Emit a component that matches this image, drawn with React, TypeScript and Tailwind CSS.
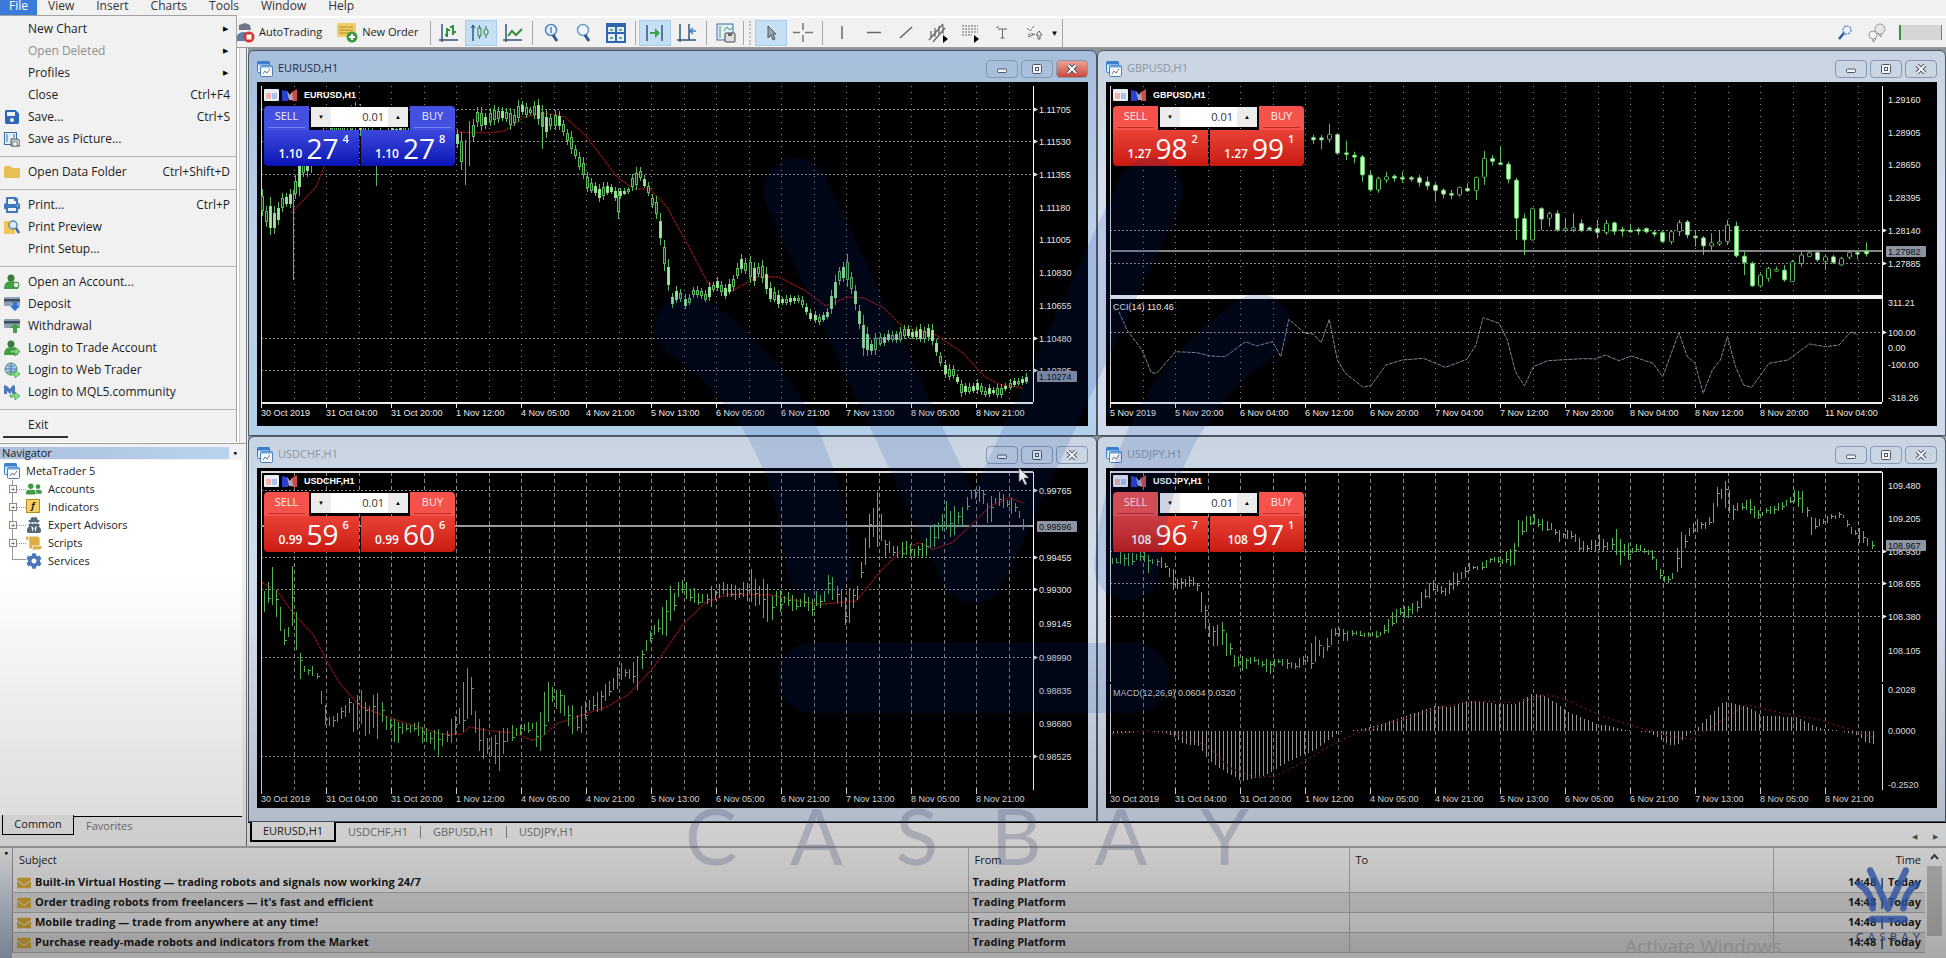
import type { ReactNode } from "react";
import {
  FaCog,
  FaEnvelope,
  FaFolder,
  FaPrint,
  FaSave,
  FaScroll,
  FaUserFriends,
  FaUserSecret,
} from "react-icons/fa";

type Point = [number, number];
type Range = [number, number, number];

const STEP = 32.5;
const LEFT = 4;
const AXIS = 776;

/* ---------- chart data ---------- */

const eurRanges: Range[] = [
  [5, 113, 135], [12, 121, 155], [20, 125, 145], [26, 111, 125], [36, 110, 130], [40, 70, 115], [60, 50, 80],
  [97, 18, 50], [116, 50, 80], [119, 60, 98], [124, 40, 80], [150, 40, 60], [201, 51, 68], [208, 61, 105],
  [212, 48, 100], [217, 28, 61], [221, 25, 41], [229, 28, 48], [237, 26, 41], [245, 28, 40], [254, 30, 46],
  [262, 21, 35], [273, 26, 33], [281, 18, 38], [285, 25, 48], [292, 33, 53], [300, 30, 43], [308, 45, 58],
  [314, 53, 71], [322, 73, 85], [329, 85, 108], [336, 103, 110], [343, 105, 118], [352, 101, 110],
  [360, 108, 118], [371, 105, 111], [378, 86, 106], [382, 83, 98], [391, 98, 118], [399, 118, 141],
  [404, 141, 165], [411, 178, 211], [414, 208, 226], [421, 208, 218], [429, 215, 226], [437, 205, 211],
  [448, 206, 220], [459, 198, 208], [466, 205, 216], [476, 195, 208], [481, 175, 195], [487, 173, 185],
  [495, 178, 201], [503, 178, 191], [509, 191, 211], [517, 208, 223], [528, 216, 223], [541, 213, 221],
  [552, 225, 235], [558, 233, 241], [572, 228, 236], [575, 195, 225], [585, 175, 198], [591, 178, 205],
  [599, 201, 228], [605, 225, 275], [613, 255, 276], [621, 255, 265], [632, 248, 261], [651, 245, 258],
  [668, 246, 258], [676, 243, 261], [681, 261, 281], [687, 278, 296], [695, 286, 293], [703, 295, 311],
  [711, 303, 313], [720, 300, 310], [728, 305, 313], [742, 303, 315], [753, 300, 305], [769, 293, 300],
];

const eurSpikes: Range[] = [[36, 110, 196], [285, 25, 65], [361, 108, 135]];

const eurAverage: Point[] = [
  [34, 131], [59, 105], [70, 78], [120, 52], [199, 50], [229, 51], [248, 49], [267, 35], [289, 31], [308, 35],
  [330, 55], [360, 95], [377, 107], [393, 107], [410, 125], [432, 165], [451, 201], [473, 210], [500, 195],
  [522, 195], [547, 208], [569, 224], [591, 215], [607, 216], [627, 226], [646, 245], [679, 253], [706, 271],
  [728, 295], [744, 303], [766, 306],
];

// high, body top, body bottom, low, 1 when the body is filled
const gbpCandles = [
  [405, 412, 420, 432, 1], [405, 413, 420, 448, 1], [372, 403, 418, 428, 0], [400, 403, 460, 465, 1],
  [422, 458, 462, 480, 1], [455, 465, 472, 490, 1], [465, 470, 525, 545, 1], [513, 525, 570, 575, 1],
  [530, 535, 570, 578, 0], [515, 530, 540, 548, 0], [523, 528, 535, 545, 1], [515, 532, 537, 548, 1],
  [528, 532, 536, 545, 1], [525, 533, 548, 560, 1], [530, 545, 558, 570, 1], [550, 555, 572, 605, 1],
  [565, 570, 583, 595, 1], [570, 580, 583, 598, 1], [560, 562, 585, 590, 0], [550, 565, 573, 575, 1],
  [530, 532, 572, 600, 0], [453, 475, 532, 555, 0], [465, 475, 485, 497, 1], [440, 488, 492, 495, 1],
  [485, 492, 538, 550, 1], [533, 540, 655, 720, 1], [640, 655, 720, 765, 1], [625, 625, 720, 720, 0],
  [622, 625, 658, 690, 1], [635, 640, 655, 680, 0], [630, 640, 690, 695, 1], [655, 685, 690, 697, 0],
  [640, 683, 690, 697, 0], [658, 670, 692, 697, 1], [680, 683, 688, 693, 1], [660, 685, 698, 715, 1],
  [660, 670, 698, 705, 0], [665, 668, 695, 705, 1], [680, 688, 692, 710, 1], [675, 690, 693, 695, 1],
  [682, 688, 694, 705, 1], [683, 685, 696, 700, 1], [690, 697, 700, 710, 1], [690, 697, 725, 728, 1],
  [690, 695, 725, 733, 0], [660, 668, 695, 708, 0], [660, 665, 705, 715, 1], [690, 708, 712, 740, 1],
  [708, 713, 738, 765, 1], [700, 728, 738, 750, 0], [690, 725, 732, 738, 0], [660, 675, 725, 735, 0],
  [665, 678, 768, 773, 1], [755, 768, 788, 825, 1], [785, 790, 858, 860, 1], [820, 825, 858, 863, 0],
  [800, 805, 835, 845, 0], [800, 808, 810, 813, 0], [795, 810, 840, 845, 1], [780, 785, 845, 845, 0],
  [755, 765, 790, 800, 0], [750, 758, 770, 770, 0], [753, 757, 780, 785, 1], [765, 770, 785, 810, 0],
  [765, 770, 788, 792, 1], [770, 775, 795, 797, 0], [750, 757, 772, 778, 0], [750, 757, 762, 778, 1],
  [727, 753, 762, 770, 1],
];

const cci: Point[] = [
  [35, 245], [50, 300], [78, 360], [95, 428], [105, 430], [140, 365], [180, 368], [205, 378], [232, 380],
  [270, 335], [290, 348], [320, 335], [335, 380], [350, 268], [380, 310], [395, 312], [410, 338], [425, 268],
  [440, 390], [455, 430], [488, 472], [503, 465], [530, 405], [560, 390], [600, 385], [640, 412], [680, 388],
  [697, 345], [710, 263], [740, 280], [755, 330], [770, 425], [787, 468], [803, 410], [830, 392], [895, 386],
  [920, 387], [937, 375], [962, 392], [985, 378], [1025, 400], [1043, 440], [1073, 308], [1088, 378],
  [1103, 400], [1118, 490], [1135, 420], [1150, 390], [1163, 320], [1178, 410], [1193, 465], [1208, 472],
  [1240, 400], [1275, 390], [1315, 342], [1345, 350], [1370, 345], [1392, 305], [1405, 315],
];

const chfRanges: Range[] = [
  [25, 490, 550], [35, 400, 520], [45, 450, 540], [50, 490, 570], [62, 590, 640], [70, 580, 630], [78, 400, 640],
  [88, 630, 750], [95, 680, 740], [105, 705, 735], [120, 710, 740], [125, 720, 805], [133, 810, 880],
  [148, 860, 890], [165, 830, 860], [180, 795, 860], [190, 800, 915], [200, 780, 900], [212, 820, 915],
  [222, 815, 910], [235, 790, 905], [245, 830, 890], [257, 860, 920], [268, 870, 930], [280, 880, 910],
  [300, 865, 905], [315, 880, 930], [330, 890, 940], [345, 900, 965], [360, 885, 940], [368, 860, 935],
  [378, 840, 890], [385, 830, 890], [391, 705, 900], [398, 720, 870], [410, 810, 940], [413, 830, 975],
  [425, 890, 970], [445, 920, 990], [457, 900, 1055], [465, 900, 960], [480, 885, 920], [495, 885, 905],
  [515, 870, 905], [524, 880, 975], [535, 790, 915], [546, 742, 840], [555, 780, 830], [570, 790, 850],
  [585, 825, 910], [592, 840, 920], [605, 830, 895], [620, 795, 830], [635, 790, 850], [650, 760, 800],
  [665, 730, 790], [673, 690, 760], [690, 700, 755], [700, 700, 760], [709, 650, 775], [720, 620, 680],
  [735, 560, 630], [745, 570, 615], [760, 490, 610], [768, 460, 580], [780, 460, 500], [793, 445, 500],
  [805, 465, 515], [820, 485, 520], [835, 470, 525], [850, 470, 520], [865, 455, 490], [885, 460, 510],
  [900, 450, 500], [915, 415, 500], [930, 440, 530], [945, 480, 575], [955, 480, 550], [975, 480, 525],
  [990, 490, 555], [1005, 495, 540], [1025, 490, 550], [1045, 480, 515], [1057, 425, 500], [1070, 455, 510],
  [1083, 460, 580], [1088, 500, 600], [1095, 470, 560], [1108, 450, 500], [1117, 320, 440], [1125, 300, 380],
  [1132, 185, 350], [1139, 190, 340], [1147, 215, 320], [1155, 310, 380], [1170, 330, 385], [1185, 325, 385],
  [1205, 340, 390], [1225, 340, 380], [1240, 290, 360], [1255, 260, 330], [1270, 200, 310], [1280, 240, 310],
  [1295, 225, 300], [1310, 175, 220], [1325, 165, 210], [1340, 180, 225], [1347, 200, 325], [1355, 190, 230],
  [1370, 175, 225], [1385, 205, 245], [1400, 225, 245], [1408, 250, 300], [1415, 275, 290],
];

const chfAverage: Point[] = [
  [22, 455], [50, 480], [80, 550], [115, 610], [140, 690], [165, 760], [200, 825], [250, 858], [300, 885],
  [350, 910], [385, 910], [400, 888], [440, 900], [480, 905], [515, 928], [530, 920], [560, 878], [600, 855],
  [650, 828], [690, 790], [735, 710], [790, 580], [830, 515], [870, 490], [950, 492], [1000, 510], [1040, 520],
  [1105, 510], [1150, 420], [1190, 355], [1220, 335], [1245, 355], [1280, 335], [1310, 290], [1350, 225],
  [1385, 200], [1412, 218],
];

const jpyRanges: Range[] = [
  [22, 385, 400], [35, 365, 400], [50, 365, 405], [65, 365, 395], [80, 360, 400], [88, 365, 430], [100, 375, 405],
  [120, 385, 420], [133, 405, 480], [145, 440, 475], [160, 440, 465], [172, 430, 465], [183, 460, 500],
  [192, 480, 585], [200, 575, 620], [207, 590, 640], [222, 572, 650], [235, 620, 670], [250, 660, 715],
  [258, 675, 720], [275, 680, 705], [290, 675, 700], [303, 680, 715], [312, 680, 730], [330, 680, 695],
  [345, 685, 710], [362, 690, 720], [378, 670, 700], [387, 680, 700], [395, 605, 720], [403, 630, 680],
  [410, 640, 715], [418, 625, 675], [433, 580, 620], [445, 590, 620], [455, 600, 640], [470, 600, 615],
  [500, 607, 618], [520, 600, 620], [535, 560, 600], [545, 535, 575], [560, 525, 560], [572, 530, 560],
  [590, 500, 545], [602, 465, 510], [620, 450, 480], [640, 475, 495], [652, 430, 480], [670, 420, 455],
  [685, 395, 425], [705, 400, 420], [725, 370, 400], [745, 375, 405], [765, 355, 405], [772, 285, 390],
  [780, 250, 320], [795, 265, 300], [803, 245, 275], [820, 265, 300], [835, 270, 300], [850, 300, 330],
  [880, 305, 330], [888, 320, 365], [905, 335, 365], [922, 310, 350], [940, 320, 360], [952, 325, 350],
  [960, 285, 395], [968, 340, 395], [985, 340, 375], [1003, 340, 365], [1020, 355, 385], [1035, 390, 435],
  [1047, 440, 460], [1065, 415, 440], [1073, 290, 440], [1082, 310, 350], [1097, 265, 310], [1110, 270, 300],
  [1125, 265, 290], [1135, 215, 290], [1143, 165, 240], [1155, 160, 200], [1163, 160, 240], [1170, 210, 280],
  [1185, 215, 245], [1200, 185, 240], [1215, 240, 280], [1235, 230, 250], [1255, 220, 245], [1275, 200, 225],
  [1292, 165, 215], [1305, 195, 250], [1315, 240, 305], [1335, 265, 290], [1355, 250, 265], [1375, 240, 260],
  [1390, 280, 305], [1410, 300, 335], [1425, 315, 350], [1435, 335, 360],
];

const macd: Point[] = [
  [22, 908], [60, 905], [80, 900], [125, 905], [155, 940], [180, 942], [200, 985], [225, 1015], [262, 1050],
  [300, 1038], [350, 990], [400, 955], [440, 905], [480, 895], [520, 880], [560, 858], [620, 825], [650, 828],
  [682, 808], [730, 818], [770, 818], [803, 785], [830, 800], [870, 845], [920, 878], [980, 898], [1020, 905],
  [1050, 938], [1068, 945], [1085, 915], [1110, 885], [1155, 812], [1195, 825], [1230, 855], [1290, 858],
  [1330, 890], [1380, 902], [1405, 912], [1420, 935], [1435, 940],
];

const macdSignal: Point[] = [
  [22, 910], [80, 900], [150, 912], [200, 945], [240, 1010], [280, 1035], [320, 1038], [370, 1000], [420, 950],
  [470, 910], [520, 885], [580, 855], [640, 825], [700, 810], [770, 815], [830, 790], [870, 810], [930, 855],
  [1000, 890], [1060, 918], [1100, 925], [1140, 880], [1200, 822], [1260, 845], [1330, 865], [1400, 900],
  [1435, 920],
];

const octoberTimes = [
  "30 Oct 2019", "31 Oct 04:00", "31 Oct 20:00", "1 Nov 12:00", "4 Nov 05:00", "4 Nov 21:00",
  "5 Nov 13:00", "6 Nov 05:00", "6 Nov 21:00", "7 Nov 13:00", "8 Nov 05:00", "8 Nov 21:00",
];

const novemberTimes = [
  "5 Nov 2019", "5 Nov 20:00", "6 Nov 04:00", "6 Nov 12:00", "6 Nov 20:00", "7 Nov 04:00",
  "7 Nov 12:00", "7 Nov 20:00", "8 Nov 04:00", "8 Nov 12:00", "8 Nov 20:00", "11 Nov 04:00",
];

/* ---------- chart helpers ---------- */

const noise = (n: number) => {
  const v = Math.sin(n * 12.9898) * 43758.5453;
  return v - Math.floor(v);
};

const scalePoints = (points: Point[], kx: number, dx: number, dy: number): Point[] =>
  points.map(([x, y]) => [x * kx + dx, y / 3 + dy]);

const scaleRanges = (ranges: Range[], kx: number, dx: number, dy: number): Range[] =>
  ranges.map(([x, hi, lo]) => [x * kx + dx, hi / 3 + dy, lo / 3 + dy]);

const toBars = (ranges: Range[]): Range[] => {
  const bars: Range[] = [];
  const last = ranges[ranges.length - 1][0];
  let k = 0;
  for (let i = 0, x = ranges[0][0]; x <= last; i++, x += STEP / 8) {
    while (k < ranges.length - 2 && ranges[k + 1][0] < x) k++;
    const a = ranges[k];
    const b = ranges[k + 1];
    const t = Math.min(1, Math.max(0, (x - a[0]) / (b[0] - a[0])));
    const hi = a[1] + (b[1] - a[1]) * t;
    const lo = a[2] + (b[2] - a[2]) * t;
    const size = lo - hi;
    bars.push([
      Math.round(x),
      hi + (noise(i) - 0.35) * size * 0.5,
      lo - (noise(i + 500) - 0.35) * size * 0.5,
    ]);
  }
  return bars;
};

const line = (points: Point[]) => points.map(([x, y]) => `${x},${y}`).join(" ");

const valueAt = (points: Point[], x: number) => {
  const i = Math.max(1, points.findIndex((p) => p[0] >= x));
  const [a, b] = [points[i - 1], points[i]];
  return a[1] + ((b[1] - a[1]) * (x - a[0])) / (b[0] - a[0]);
};

const OhlcBars = ({ ranges }: { ranges: Range[] }) => {
  const d = toBars(ranges)
    .map(([x, hi, lo], i) => {
      const close = Math.round(hi + (lo - hi) * (0.2 + noise(i + 40) * 0.6)) + 0.5;
      return `M${x + 0.5} ${hi}V${lo}${i % 2 ? `M${x} ${close}h3` : ""}`;
    })
    .join("");
  return <path d={d} stroke="#57b457" fill="none" shapeRendering="crispEdges" />;
};

const MovingAverage = ({ points }: { points: Point[] }) => (
  <>
    <polyline points={line(points)} fill="none" stroke="#4a0606" strokeWidth="1.5" />
    <polyline points={line(points)} fill="none" stroke="#8e2424" strokeDasharray="2 2" />
  </>
);

type Label = { y: number; text: string; grid?: boolean };

type PlotProps = {
  height: number;
  labels: Label[];
  times: string[];
  current: { y: number; text: string };
  lower?: boolean;
  title: string;
  children: ReactNode;
};

const Plot = ({ height, labels, times, current, lower, title, children }: PlotProps) => {
  const bottom = lower ? 322 : 320;
  const columns = Array.from({ length: 23 }, (_, i) => Math.round(LEFT + STEP * (i + 1)));
  return (
    <svg
      viewBox={`0 0 831 ${height}`}
      className="block h-full w-full"
      role="img"
      aria-label={title}
      fontFamily="'Liberation Sans', Arial, sans-serif"
      fontSize="9"
    >
      <g shapeRendering="crispEdges">
        {columns.map((x) => (
          <line key={x} x1={x + 0.5} x2={x + 0.5} y1="4" y2={bottom} stroke={lower ? "#858585" : "#8c8c8c"} strokeDasharray={lower ? "4 3" : "1 5"} />
        ))}
        {labels.filter((l) => l.grid).map((l) => (
          <line key={l.text} x1={LEFT} x2={AXIS} y1={l.y + 0.5} y2={l.y + 0.5} stroke="#8f8f8f" strokeDasharray="2 2" />
        ))}
        <line x1={LEFT + 0.5} x2={LEFT + 0.5} y1="4" y2={bottom} stroke="#d8d8d8" />
        <line x1={AXIS + 0.5} x2={AXIS + 0.5} y1="4" y2={bottom} stroke="#fff" />
        {lower ? (
          <line x1={LEFT} x2={AXIS} y1="4" y2="4" stroke="#e0e0e0" strokeWidth="2" />
        ) : (
          <line x1={LEFT} x2={AXIS} y1="321" y2="321" stroke="#f0f0f0" strokeWidth="2" />
        )}
      </g>
      {children}
      <g fill="#e8e8e8">
        {times.map((t, i) => (
          <g key={t}>
            <rect x={Math.round(LEFT + STEP * 2 * i)} y="320" width="1" height="6" />
            <text x={Math.round(LEFT + STEP * 2 * i)} y="334">{t}</text>
          </g>
        ))}
        {labels.map((l) => (
          <g key={l.text}>
            {l.grid && <path d={`M${AXIS} ${l.y - 2}l5 2.5l-5 2.5z`} />}
            <text x="782" y={l.y + 4}>{l.text}</text>
          </g>
        ))}
      </g>
      <rect x="780" y={current.y - 5} width="40" height="11" rx="1" fill="#8d95a3" />
      <text x="782" y={current.y + 4} fill="#0c0e14">{current.text}</text>
    </svg>
  );
};

const EurChart = () => (
  <Plot
    height={344}
    title="EURUSD,H1 chart"
    times={octoberTimes}
    current={{ y: 294, text: "1.10274" }}
    labels={[
      { y: 21, text: "1.11705", grid: true },
      { y: 59, text: "1.11530", grid: true },
      { y: 92, text: "1.11355", grid: true },
      { y: 125, text: "1.11180" },
      { y: 157, text: "1.11005" },
      { y: 190, text: "1.10830" },
      { y: 223, text: "1.10655" },
      { y: 256, text: "1.10480", grid: true },
      { y: 288, text: "1.10305", grid: true },
    ].map((l, i) => (i === 0 ? { ...l, y: 27 } : l))}
  >
    <MovingAverage points={eurAverage} />
    <g shapeRendering="crispEdges" stroke="#5cb85c">
      {[...toBars(eurRanges), ...eurSpikes].map(([x, hi, lo], i) => {
        const size = lo - hi;
        const bright = noise(i + 7) > 0.5;
        return (
          <g key={i}>
            <line x1={x + 0.5} x2={x + 0.5} y1={hi - 2} y2={lo + 2} />
            {size < 40 && (
              <rect
                x={x - 0.5}
                y={Math.round(hi + size * 0.2) + 0.5}
                width="2"
                height={Math.max(2, Math.round(size * 0.6))}
                fill={bright ? "#a5e6a5" : "#123a12"}
                stroke={bright ? "#8fd68f" : "#5cb85c"}
              />
            )}
          </g>
        );
      })}
    </g>
  </Plot>
);

const GbpChart = () => (
  <Plot
    height={344}
    title="GBPUSD,H1 chart"
    times={novemberTimes}
    current={{ y: 169, text: "1.27982" }}
    labels={[
      { y: 17, text: "1.29160" },
      { y: 50, text: "1.28905" },
      { y: 82, text: "1.28650" },
      { y: 115, text: "1.28395" },
      { y: 148, text: "1.28140", grid: true },
      { y: 181, text: "1.27885", grid: true },
      { y: 220, text: "311.21" },
      { y: 250, text: "100.00", grid: true },
      { y: 265, text: "0.00" },
      { y: 282, text: "-100.00" },
      { y: 315, text: "-318.26" },
    ]}
  >
    <rect x={LEFT} y="168" width={AXIS - LEFT} height="2" fill="#85828a" />
    <g stroke="#5cc05c">
      {gbpCandles.map(([hi, top, bottom, lo, filled], i) => {
        const x = Math.round(207 + (STEP / 4) * i) + 0.5;
        const body = Math.max(2, (bottom - top) / 3);
        return (
          <g key={i}>
            <line x1={x} x2={x} y1={hi / 3 - 82} y2={lo / 3 - 82} />
            <rect x={x - 2} y={top / 3 - 82} width="4" height={body} rx="1" fill={filled ? "#c9ffc9" : "#000"} />
          </g>
        );
      })}
    </g>
    <rect x={LEFT} y="213" width={AXIS - LEFT} height="4" fill="#f2f2f2" />
    <text x="7" y="228" fill="#e8e8e8">CCI(14) 110.46</text>
    <polyline points={line(scalePoints(cci, 0.5395, -6, 148))} fill="none" stroke="#7c8894" strokeDasharray="4 1" />
  </Plot>
);

const ChfChart = () => (
  <Plot
    height={340}
    lower
    title="USDCHF,H1 chart"
    times={octoberTimes}
    current={{ y: 58, text: "0.99596" }}
    labels={[
      { y: 22, text: "0.99765", grid: true },
      { y: 89, text: "0.99455", grid: true },
      { y: 121, text: "0.99300", grid: true },
      { y: 155, text: "0.99145" },
      { y: 189, text: "0.98990", grid: true },
      { y: 222, text: "0.98835" },
      { y: 255, text: "0.98680" },
      { y: 288, text: "0.98525", grid: true },
    ]}
  >
    <rect x={LEFT} y="57" width={AXIS - LEFT} height="2" fill="#9a9a9a" />
    <MovingAverage points={scalePoints(chfAverage, 0.5485, -7, -37)} />
    <OhlcBars ranges={scaleRanges(chfRanges, 0.5485, -7, -37)} />
  </Plot>
);

const JpyChart = () => {
  const histogram = scalePoints(macd, 0.5395, -6, -37);
  const bars = Array.from({ length: 188 }, (_, i) => 7 + Math.round((i * STEP) / 8));
  return (
    <Plot
      height={340}
      lower
      title="USDJPY,H1 chart"
      times={octoberTimes}
      current={{ y: 77, text: "108.967" }}
      labels={[
        { y: 17, text: "109.480" },
        { y: 50, text: "109.205" },
        { y: 83, text: "108.930", grid: true },
        { y: 115, text: "108.655", grid: true },
        { y: 148, text: "108.380", grid: true },
        { y: 182, text: "108.105" },
        { y: 221, text: "0.2028" },
        { y: 262, text: "0.0000" },
        { y: 316, text: "-0.2520" },
      ]}
    >
      <OhlcBars ranges={scaleRanges(jpyRanges, 0.5395, -6, -37)} />
      <rect x="0" y="214" width="780" height="2" fill="#000" />
      <path d={bars.map((x) => `M${x + 0.5} 263V${valueAt(histogram, x)}`).join("")} stroke="#a0a0a0" shapeRendering="crispEdges" />
      <polyline points={line(scalePoints(macdSignal, 0.5395, -6, -37))} fill="none" stroke="#6a1414" strokeWidth="1.5" strokeDasharray="2 3" />
      <text x="7" y="228" fill="#d8d8d8">MACD(12,26,9) 0.0604 0.0320</text>
    </Plot>
  );
};

/* ---------- chart windows ---------- */

const WindowIcon = () => (
  <svg viewBox="0 0 16 16" className="size-4 shrink-0" aria-hidden="true">
    <rect x="0.5" y="0.5" width="12" height="11" rx="1" fill="#dcecfb" stroke="#3b7fd0" />
    <rect x="0.5" y="0.5" width="12" height="3" fill="#3b7fd0" />
    <rect x="3.5" y="4.5" width="12" height="11" rx="1" fill="#f4f8fc" stroke="#4a7fb8" />
    <rect x="3.5" y="4.5" width="12" height="2" fill="#6ba4e2" />
    <path d="M6 13l2-3 2 2 3-4" fill="none" stroke="#777" />
  </svg>
);

const colors = {
  blue: { tab: "bg-[#4450e0]", block: "bg-linear-to-b from-[#3c46dc] to-[#0b12b4]", edge: "border-[#7583f5]" },
  red: { tab: "bg-[#f4524a]", block: "bg-linear-to-b from-[#ea4136] to-[#c9190f]", edge: "border-[#c32a22]" },
};

type Quote = { base: string; big: string; sup: string };

const PriceBlock = ({ quote, className }: { quote: Quote; className: string }) => (
  <span className={`flex h-9 flex-1 items-end justify-end gap-1 pr-2 pb-1 text-white ${className}`}>
    <span className="text-xs leading-4 font-semibold">{quote.base}</span>
    <span className="text-[28px] leading-7">{quote.big}</span>
    <span className="w-2 self-start pt-px text-[11px] leading-4 font-semibold">{quote.sup}</span>
  </span>
);

type TradeProps = { symbol: string; color: "blue" | "red"; sell: Quote; buy: Quote };

const TradePanel = ({ symbol, color, sell, buy }: TradeProps) => {
  const c = colors[color];
  return (
    <div className="absolute top-1.5 left-[7px] w-[191px]">
      <div className="flex h-[18px] items-center gap-[3px] pb-1">
        <svg viewBox="0 0 15 12" className="h-3 w-[15px]" aria-hidden="true">
          <rect width="15" height="12" rx="1" fill="#e9edf5" />
          <rect x="2" y="4" width="5" height="6" fill="#f3b4a8" />
          <rect x="8" y="4" width="5" height="6" fill="#a9c4ea" />
        </svg>
        <svg viewBox="0 0 15 12" className="h-3 w-[15px]" aria-hidden="true">
          <path d="M0 1l5 1 3 4-2 6H0z" fill="#2b3fd0" />
          <path d="M15 0l-5 3-2 3 2 6h5z" fill="#d04a48" />
          <path d="M5 2l3 4 2-3 1 8H7z" fill="#a9a9b8" />
        </svg>
        <span className="ml-1 font-['Liberation_Sans',Arial,sans-serif] text-[9px] leading-3 font-bold text-white">{symbol},H1</span>
      </div>
      <div className="relative">
        <div className="flex justify-between">
          <div className={`h-6 w-[45px] rounded-tl-sm px-1 ${c.tab}`}>
            <button className={`block w-full border-b pb-px text-center text-[11px] leading-5 text-white/90 ${c.edge}`}>SELL</button>
          </div>
          <div className={`h-6 w-[45px] rounded-tr-sm px-1 ${c.tab}`}>
            <button className={`block w-full border-b pb-px text-center text-[11px] leading-5 text-white/90 ${c.edge}`}>BUY</button>
          </div>
        </div>
        <div className="flex gap-0.5">
          <PriceBlock quote={sell} className={`rounded-bl-sm ${c.block}`} />
          <PriceBlock quote={buy} className={`rounded-br-sm ${c.block}`} />
        </div>
        {/* volume box sits over the seam of the two halves */}
        <div className="absolute top-0 left-[46px] flex h-[22px] w-[99px] border border-black bg-[#ececec]">
          <button aria-label="Decrease volume" className="w-5 text-[6px] text-black">▼</button>
          <input aria-label={`${symbol} volume`} defaultValue="0.01" className="w-0 flex-1 bg-white pr-1 text-right text-[11px] text-[#333]" />
          <button aria-label="Increase volume" className="w-5 text-[6px] text-black">▲</button>
        </div>
      </div>
    </div>
  );
};

type ChartWindowProps = TradeProps & { active?: boolean; lower?: boolean; children: ReactNode };

const ChartWindow = ({ active, lower, children, ...trade }: ChartWindowProps) => {
  const button = "flex h-[18px] w-8 items-center justify-center rounded-sm border border-[#8797ad] text-[#4c5563]";
  const frame = active
    ? "bg-linear-to-b from-[#a6bedb] via-[#bcd0ea] to-[#b3d0ea]"
    : "bg-linear-to-b from-[#c8d4e2] via-[#d6e0f0] to-[#cfdaea]";
  return (
    <section className={`flex min-h-0 min-w-0 flex-col rounded-t-md border border-[#4d5663] px-2 ${lower ? "pb-[13px]" : "pb-[9px]"} ${frame}`}>
      <header className="flex h-[31px] items-center gap-[3px] pt-1">
        <WindowIcon />
        <h2 className={`flex-1 pl-0.5 text-[11px] ${active ? "text-[#1f2c3f]" : "text-[#8b95a3]"}`}>{trade.symbol},H1</h2>
        <button aria-label="Minimize" className={button}>
          <svg viewBox="0 0 12 10" className="h-2.5 w-3"><rect x="1.5" y="5" width="9" height="3.5" rx="1" fill="#f4f7fb" stroke="currentColor" /></svg>
        </button>
        <button aria-label="Maximize" className={button}>
          <svg viewBox="0 0 12 10" className="h-2.5 w-3"><rect x="1.5" y="0.5" width="9" height="9" rx="1" fill="#f4f7fb" stroke="currentColor" /><rect x="4.5" y="3.5" width="3" height="3" fill="none" stroke="currentColor" /></svg>
        </button>
        <button aria-label="Close" className={`${button} ${active ? "bg-linear-to-b from-[#e9a195] to-[#cb4637]" : ""}`}>
          <svg viewBox="0 0 12 10" className="h-2.5 w-3"><path d="M2 1l8 8M10 1L2 9" stroke="currentColor" strokeWidth="4" /><path d="M2 1l8 8M10 1L2 9" stroke="#f8fafc" strokeWidth="2" /></svg>
        </button>
      </header>
      <div className="relative min-h-0 flex-1 bg-black">
        {children}
        <TradePanel {...trade} />
      </div>
    </section>
  );
};

/* ---------- menus and toolbar ---------- */

const UserIcon = ({ arrow }: { arrow?: boolean }) => (
  <svg viewBox="0 0 16 16" className="size-4" aria-hidden="true">
    <circle cx="7" cy="4" r="3.5" fill="#3a7d3a" />
    <path d="M0 15c0-6 3-8 7-8s7 2 7 8z" fill="#43a047" />
    {arrow ? <path d="M6 10h5V7l5 4.5-5 4.5v-3H6z" fill="#7fd67f" stroke="#2e7d32" strokeWidth="0.7" /> : <circle cx="12" cy="11" r="3" fill="#d6f2d6" stroke="#2e7d32" />}
  </svg>
);

const CardIcon = ({ up }: { up?: boolean }) => (
  <svg viewBox="0 0 16 16" className="size-4" aria-hidden="true">
    <rect y="1" width="16" height="9" rx="1" fill="#8fa1b8" />
    <rect y="3" width="16" height="2.5" fill="#3d4a5c" />
    {up ? <path d="M11 5l5 5h-3v5H9v-5H6z" fill="#43a047" /> : <path d="M11 15l5-5h-3V6H9v4H6z" fill="#2f74d0" />}
  </svg>
);

const PictureIcon = () => (
  <svg viewBox="0 0 16 16" className="size-4" aria-hidden="true">
    <rect x="0.5" y="1.5" width="12" height="12" fill="#e4eefa" stroke="#3b6ea8" />
    <path d="M3 3v8M10 3v4" stroke="#3b6ea8" />
    <path d="M7 15V8h7l2 2v5z" fill="#c8ccd2" stroke="#555" />
    <rect x="9" y="11" width="4" height="4" fill="#fff" stroke="#555" strokeWidth="0.6" />
  </svg>
);

const PreviewIcon = () => (
  <svg viewBox="0 0 16 16" className="size-4" aria-hidden="true">
    <path d="M0 2h8l3 3v10H0z" fill="#f2c75a" />
    <circle cx="9" cy="6" r="4" fill="#dcebfa" stroke="#5b88bd" strokeWidth="1.5" />
    <path d="M12 9l3 5" stroke="#3b6ea8" strokeWidth="2.5" />
  </svg>
);

const WebIcon = ({ m }: { m?: boolean }) => (
  <svg viewBox="0 0 16 16" className="size-4" aria-hidden="true">
    {m ? (
      <path d="M0 1l3 1 3 3 3-4 2 1v8H8V7L6 10 3 7v3H0z" fill="#4f79b8" />
    ) : (
      <>
        <circle cx="7" cy="7" r="6" fill="#a9cbe8" stroke="#4b9a5a" />
        <path d="M1 7h12M7 1v12M3 3c3 2 6 2 8 0M3 11c3-2 6-2 8 0" fill="none" stroke="#4f79b8" />
      </>
    )}
    <path d="M6 11h5V8l5 4-5 4v-3H6z" fill="#8fe08f" stroke="#2e9a32" strokeWidth="0.7" />
  </svg>
);

type MenuItem = { label: string; icon?: ReactNode; keys?: string; sub?: boolean; disabled?: boolean };

const fileMenu: MenuItem[][] = [
  [
    { label: "New Chart", sub: true },
    { label: "Open Deleted", sub: true, disabled: true },
    { label: "Profiles", sub: true },
    { label: "Close", keys: "Ctrl+F4" },
    { label: "Save...", keys: "Ctrl+S", icon: <FaSave className="size-4 text-[#2b68b8]" /> },
    { label: "Save as Picture...", icon: <PictureIcon /> },
  ],
  [{ label: "Open Data Folder", keys: "Ctrl+Shift+D", icon: <FaFolder className="size-4 text-[#e8bf52]" /> }],
  [
    { label: "Print...", keys: "Ctrl+P", icon: <FaPrint className="size-4 text-[#3f76bd]" /> },
    { label: "Print Preview", icon: <PreviewIcon /> },
    { label: "Print Setup..." },
  ],
  [
    { label: "Open an Account...", icon: <UserIcon /> },
    { label: "Deposit", icon: <CardIcon /> },
    { label: "Withdrawal", icon: <CardIcon up /> },
    { label: "Login to Trade Account", icon: <UserIcon arrow /> },
    { label: "Login to Web Trader", icon: <WebIcon /> },
    { label: "Login to MQL5.community", icon: <WebIcon m /> },
  ],
  [{ label: "Exit" }],
];

const FileMenu = () => (
  <div className="absolute top-[15px] left-0 z-20 w-[237px] border-t border-r border-[#a3a3a3] bg-[#f1f1f1] pt-0.5 text-xs">
    {fileMenu.map((group, g) => (
      <ul key={g} className={g > 0 ? "mt-1.5 border-t border-[#b5b5b5] pt-1" : ""}>
        {group.map((item) => (
          <li key={item.label}>
            <button
              disabled={item.disabled}
              className={`flex h-[22px] w-full items-center pr-1.5 pl-1 text-left ${item.disabled ? "text-[#8f8f8f]" : "text-[#1c1c1c]"}`}
            >
              <span className="w-6">{item.icon}</span>
              <span className="flex-1">{item.label}</span>
              {item.keys && <span>{item.keys}</span>}
              {item.sub && <span className="pr-0.5 text-[7px] text-black">▶</span>}
            </button>
          </li>
        ))}
      </ul>
    ))}
    <div className="mb-1 ml-[3px] h-0.5 w-[65px] bg-[#333]" />
  </div>
);

const Glyph = ({ children }: { children: ReactNode }) => (
  <svg viewBox="0 0 20 20" className="size-5" fill="none" stroke="#666" aria-hidden="true">
    {children}
  </svg>
);

const Tool = ({ label, on, children }: { label: string; on?: boolean; children: ReactNode }) => (
  <button
    aria-label={label}
    className={`flex h-[26px] w-8 items-center justify-center ${on ? "border border-[#a9cdee] bg-[#c5dff5]" : ""}`}
  >
    <Glyph>{children}</Glyph>
  </button>
);

const Divider = () => <span className="mx-[3px] h-6 w-px bg-[#a8a8a8]" />;

const axes = <path d="M3 1v18M0 17h19" stroke="#33557e" strokeWidth="1.5" />;

const Toolbar = () => (
  <div className="flex h-8 shrink-0 items-center border-t-2 border-white border-b border-b-[#9b9b9b] bg-[#f1f1f1] pr-1 pl-[235px]">
    <button className="flex items-center gap-1">
      <svg viewBox="0 0 20 20" className="size-5" aria-hidden="true">
        <path d="M4 2l6-2 5 2 1 5H4z" fill="#6d7682" />
        <path d="M1 18c0-6 3-9 8-9s8 3 8 9z" fill="#5f7fa8" />
        <circle cx="14" cy="14" r="5.5" fill="#d9352c" />
        <rect x="11.5" y="11.5" width="5" height="5" fill="#fff" />
      </svg>
      AutoTrading
    </button>
    <button className="ml-3.5 flex items-center gap-1">
      <svg viewBox="0 0 22 20" className="h-5 w-[22px]" aria-hidden="true">
        <rect x="1" y="0" width="19" height="14" rx="1" fill="#f1cf68" />
        <path d="M3 4h14M3 7h14M3 10h10" stroke="#b48a22" />
        <circle cx="16" cy="14" r="5.5" fill="#3c9a3f" />
        <path d="M16 11v6M13 14h6" stroke="#fff" strokeWidth="2" />
      </svg>
      New Order
    </button>
    <span className="mr-0.5 ml-3 h-6 w-px bg-[#a8a8a8]" />
    <Tool label="Bar chart">{axes}<path d="M8 5v9M6 12h2M8 7h3M14 2v10M11 4h3M14 9h3" stroke="#2f8f3a" strokeWidth="2" /></Tool>
    <Tool label="Candlesticks" on><path d="M2 2v16" stroke="#33557e" strokeWidth="1.500" /><path d="M0 5l2-3 2 3" stroke="#33557e" /><rect x="7" y="5" width="3" height="8" stroke="#2f8f3a" /><path d="M8.5 2v3M8.5 13v3" stroke="#2f8f3a" /><rect x="13" y="6" width="4" height="6" rx="2" stroke="#2f8f3a" /><path d="M15 3v3M15 12v3" stroke="#2f8f3a" /></Tool>
    <Tool label="Line chart">{axes}<path d="M5 13l4-5 4 4 6-6" stroke="#2f8f3a" strokeWidth="2" /></Tool>
    <Divider />
    <Tool label="Zoom in"><circle cx="9" cy="7" r="5.5" stroke="#5382bd" strokeWidth="1.5" fill="#e6f1fb" /><path d="M9 4v6" stroke="#5382bd" strokeWidth="1.5" /><path d="M11 12l4 6" stroke="#2c5a95" strokeWidth="3" /></Tool>
    <Tool label="Zoom out"><circle cx="9" cy="7" r="5.5" stroke="#6f98c9" strokeWidth="1.5" fill="#eef5fc" /><path d="M11 12l4 6" stroke="#2c5a95" strokeWidth="3" /></Tool>
    <Tool label="Tile windows"><rect x="1" y="1" width="18" height="18" fill="#e3eefa" stroke="#2f66ad" strokeWidth="2" /><path d="M10 1v18M1 10h18M1 3h18" stroke="#2f66ad" strokeWidth="2" /><path d="M4 7h3M13 7h3M4 15h3M13 15h3" stroke="#3f8f4a" strokeWidth="1.5" /></Tool>
    <Divider />
    <Tool label="Auto scroll" on><path d="M2 2v16M17 2v16" stroke="#33557e" strokeWidth="1.5" /><path d="M5 9h5V5l5 5-5 5v-4H5z" fill="#3fa34a" stroke="none" /></Tool>
    <Tool label="Chart shift"><path d="M3 1v18M0 17h19M12 1v16" stroke="#33557e" strokeWidth="1.5" /><path d="M19 8h-5M16 5l-3 3 3 3" stroke="#3f7fcf" strokeWidth="1.5" /></Tool>
    <Divider />
    <Tool label="Templates"><rect x="1" y="1" width="16" height="16" fill="#e3eefa" stroke="#3b6ea8" /><path d="M4 3v12M8 8l3-4 3 3 3-3" stroke="#4c9a52" /><rect x="9" y="10" width="10" height="9" rx="1" fill="#ddd" stroke="#444" /><rect x="12" y="10" width="4" height="3" fill="#666" stroke="none" /></Tool>
    <span className="mx-px h-6 w-px bg-[#a8a8a8]" />
    <span className="mx-1 h-6 border-l-2 border-dotted border-[#c0c0c0]" />
    <Tool label="Cursor" on><path d="M7 3v12l3-3 2 5 2-1-2-5h3z" fill="#9aa4b0" stroke="#555" /></Tool>
    <Tool label="Crosshair"><path d="M10 0v7M10 12v7M0 9.5h7M12 9.5h8" stroke="#777" strokeWidth="1.5" /></Tool>
    <Divider />
    <Tool label="Vertical line"><path d="M10 3v13" strokeWidth="1.5" /></Tool>
    <Tool label="Horizontal line"><path d="M3 9.5h14" strokeWidth="1.5" /></Tool>
    <Tool label="Trendline"><path d="M4 15L16 4" strokeWidth="1.5" /></Tool>
    <Tool label="Channel"><path d="M1 17L15 1M5 19L17 5M3 8v7M7 5v9M11 3v9M15 2v9" strokeWidth="1.2" /><path d="M15 12l5 4-5 4z" fill="#000" stroke="none" /></Tool>
    <Tool label="Fibonacci"><path d="M2 3h16M2 6h16M2 9h16M2 12h10" strokeDasharray="2 1" /><path d="M14 12l5 4-5 4z" fill="#000" stroke="none" /></Tool>
    <Tool label="Text"><path d="M5 5V4h2M6 6h9M10.5 6v9M8.5 15h4" /></Tool>
    <Tool label="Shapes"><path d="M3 5l3 3 4-5M4 12l4-2 2 3" strokeDasharray="3 1" /><path d="M15 8l3 4h-2v4h-2v-4h-2zM4 14l7-3" /></Tool>
    <span className="text-[8px] text-black">▼</span>
    <span className="ml-1 h-7 w-px bg-[#a8a8a8]" />
    <div className="ml-auto flex items-center gap-3">
      <Glyph><circle cx="12" cy="7" r="4" stroke="#5c8fd4" strokeDasharray="2 1" strokeWidth="1.5" /><path d="M9 10l-5 6" stroke="#2c5aa5" strokeWidth="2.5" /></Glyph>
      <Glyph><circle cx="13" cy="6" r="5" fill="#e6e6e6" stroke="#999" /><circle cx="6" cy="12" r="4" fill="#f6f6f6" stroke="#999" /><path d="M6 16v3l3-3M14 11v3l-3-3" stroke="#888" /></Glyph>
      <span className="h-[15px] w-[43px] border-r border-l-2 border-r-[#777] border-l-[#3c8f45] bg-[#d6d6d6]" />
    </div>
  </div>
);

/* ---------- navigator ---------- */

const tree = [
  { label: "Accounts", icon: <FaUserFriends className="size-4 text-[#3f9a45]" /> },
  { label: "Indicators", icon: <span className="block size-3.5 border border-[#b98a22] bg-[#f5cf62] text-center text-[9px] leading-3 font-bold italic">f</span> },
  { label: "Expert Advisors", icon: <FaUserSecret className="size-4 text-[#56677c]" /> },
  { label: "Scripts", icon: <FaScroll className="size-4 text-[#dcae42]" /> },
  { label: "Services", icon: <FaCog className="size-4 text-[#4a78b8]" />, leaf: true },
];

const Navigator = () => (
  <aside className="flex w-[247px] shrink-0 flex-col border-r border-[#6f757d] bg-[#f1f1f1]">
    <div className="h-[396px] border-b border-[#9f9f9f] pr-1.5">
      <div className="h-full border-r border-[#ccc] bg-white" />
    </div>
    <div className="flex h-4 items-center gap-1 pt-0.5 text-[#1c1c1c]">
      <h2 className="h-3 w-[229px] bg-linear-to-r from-[#aabfdd] to-[#b9d3ee] pl-0.5 text-[11px] leading-3">Navigator</h2>
      <button aria-label="Close navigator" className="text-[7px]">●</button>
    </div>
    <div className="mr-1 flex-1 bg-white pt-0.5">
      <div className="flex h-[18px] items-center gap-1.5 pl-1">
        <WindowIcon /> MetaTrader 5
      </div>
      <ul className="ml-3">
        {tree.map((node) => (
          <li key={node.label} className="flex h-[18px] items-center">
            <span className="flex h-full w-3.5 items-center">
              {node.leaf ? (
                <span className="h-2 w-full self-start border-b border-l border-[#999]" />
              ) : (
                <span className="flex h-full w-full items-center border-l border-[#999]">
                  <button aria-label={`Expand ${node.label}`} className="-ml-1 size-2 border border-[#888] bg-white text-[8px] leading-[6px] text-[#333]">+</button>
                  <span className="flex-1 border-t border-dotted border-[#999]" />
                </span>
              )}
            </span>
            <span className="mr-1.5 size-4">{node.icon}</span>
            {node.label}
          </li>
        ))}
      </ul>
    </div>
    <div className="mr-1 flex h-[30px] shrink-0">
      <button className="-mt-px ml-0.5 h-5 w-[72px] border-x border-b border-black bg-[#f1f1f1] text-center text-[#222]">Common</button>
      <button className="h-5 flex-1 border-t border-black pl-3 text-left text-[#777]">Favorites</button>
    </div>
  </aside>
);

/* ---------- mailbox ---------- */

const mails = [
  "Built-in Virtual Hosting — trading robots and signals now working 24/7",
  "Order trading robots from freelancers — it's fast and efficient",
  "Mobile trading — trade from anywhere at any time!",
  "Purchase ready-made robots and indicators from the Market",
];

const Mailbox = () => (
  <div className="flex h-28 shrink-0 overflow-hidden border-t-2 border-[#a9a9a9] bg-[#f1f1f1]">
    <div className="w-3 bg-linear-to-b from-[#f1f1f1] to-[#a9b9d3] pt-px text-center text-[7px] leading-2">●</div>
    <div className="min-w-0 flex-1">
      <table className="w-full table-fixed border-l border-[#999] text-left text-[11px] text-[#1a1a1a]">
        <colgroup>
          <col />
          <col className="w-[381px]" />
          <col className="w-[424px]" />
          <col className="w-[152px]" />
        </colgroup>
        <thead>
          <tr className="h-6">
            <th className="pl-1.5 font-normal">Subject</th>
            <th className="border-l border-[#b5b5b5] pl-1.5 font-normal">From</th>
            <th className="border-l border-[#b5b5b5] pl-1.5 font-normal">To</th>
            <th className="border-l border-[#b5b5b5] pr-1 text-right font-normal">Time</th>
          </tr>
        </thead>
        <tbody className="font-bold">
          {mails.map((mail) => (
            <tr key={mail} className="h-5 border-b border-[#b5b5b5] even:bg-[#dfdfdf]">
              <td className="truncate pl-1 leading-4">
                <FaEnvelope className="mr-1 inline size-3.5 text-[#dcae38]" />
                {mail}
              </td>
              <td className="border-l border-[#b5b5b5] pl-1 leading-4">Trading Platform</td>
              <td className="border-l border-[#b5b5b5]" />
              <td className="border-l border-[#b5b5b5] pr-1 text-right leading-4">14:48 | Today</td>
            </tr>
          ))}
        </tbody>
      </table>
    </div>
    <div className="mr-1 ml-0.5 w-[15px] text-center">
      <svg viewBox="0 0 15 18" className="h-[18px] w-[15px]"><path d="M4 11l3.5-4L11 11" fill="none" stroke="#444" strokeWidth="2" /></svg>
      <div className="h-[70px] bg-[#c0c0c0]" />
    </div>
  </div>
);

/* ---------- brand marks ---------- */

const BrandMark = ({ className }: { className: string }) => (
  <svg viewBox="0 0 640 560" className={className} aria-hidden="true">
    <g fill="none" stroke="currentColor" strokeWidth="66" strokeLinecap="round" strokeLinejoin="round">
      <path d="M143 36L320 415L497 36" />
      <path d="M35 172Q152 250 166 412" />
      <path d="M605 172Q488 250 474 412" />
    </g>
    <rect x="124" y="488" width="392" height="70" rx="35" fill="currentColor" />
  </svg>
);

const Wordmark = ({ className }: { className: string }) => (
  <div className={`flex justify-between font-[Lato,'Open_Sans',sans-serif] ${className}`}>
    {"CASBAY".split("").map((letter, i) => (
      <span key={i}>{letter}</span>
    ))}
  </div>
);

const menus = ["View", "Insert", "Charts", "Tools", "Window", "Help"];
const tabs = ["USDCHF,H1", "GBPUSD,H1", "USDJPY,H1"];

const App = () => {
  return (
    <div className="relative flex h-screen min-h-[760px] flex-col overflow-hidden bg-[#f1f1f1] font-['Open_Sans','Noto_Sans',sans-serif] text-[11px] text-[#1c1c1c]">
      <nav className="flex h-4 shrink-0 text-xs leading-3 text-[#333]">
        <button className="h-[15px] w-[37px] bg-[#3c7bd9] pb-[3px] text-white">File</button>
        {menus.map((m) => (
          <button key={m} className="px-[11px] pb-1">{m}</button>
        ))}
      </nav>
      <FileMenu />
      <Toolbar />

      <div className="flex min-h-0 flex-1">
        <Navigator />
        <main className="flex min-w-0 flex-1 flex-col pl-px">
          <div className="grid min-h-0 flex-1 grid-cols-2 grid-rows-2 bg-[#8c939c] pt-0.5">
            <ChartWindow active symbol="EURUSD" color="blue" sell={{ base: "1.10", big: "27", sup: "4" }} buy={{ base: "1.10", big: "27", sup: "8" }}>
              <EurChart />
            </ChartWindow>
            <ChartWindow symbol="GBPUSD" color="red" sell={{ base: "1.27", big: "98", sup: "2" }} buy={{ base: "1.27", big: "99", sup: "1" }}>
              <GbpChart />
            </ChartWindow>
            <ChartWindow lower symbol="USDCHF" color="red" sell={{ base: "0.99", big: "59", sup: "6" }} buy={{ base: "0.99", big: "60", sup: "6" }}>
              <ChfChart />
            </ChartWindow>
            <ChartWindow lower symbol="USDJPY" color="red" sell={{ base: "108", big: "96", sup: "7" }} buy={{ base: "108", big: "97", sup: "1" }}>
              <JpyChart />
            </ChartWindow>
          </div>
          <div className="flex h-6 shrink-0 border-t border-black text-[#777]">
            <button className="-mt-px ml-0.5 h-5 w-[86px] border-2 border-t-0 border-black bg-[#f1f1f1] text-[#222]">EURUSD,H1</button>
            <ul className="flex h-[18px] items-center">
              {tabs.map((t, i) => (
                <li key={t} className={`px-3 leading-3 ${i > 0 ? "border-l border-[#888]" : ""}`}>
                  <button>{t}</button>
                </li>
              ))}
            </ul>
            <div className="ml-auto flex gap-4 pt-1 pr-2 text-[7px] leading-3 text-[#555]">
              <button aria-label="Previous tabs">◀</button>
              <button aria-label="Next tabs">▶</button>
            </div>
          </div>
        </main>
      </div>

      <Mailbox />

      {/* brand overlay and fade across the lower part of the screen */}
      <div className="pointer-events-none absolute inset-0 z-10 bg-linear-to-b from-transparent from-60% via-black/15 via-88% to-black/30" />
      <div className="pointer-events-none absolute top-[155px] left-1/2 z-10 -translate-x-1/2">
        <BrandMark className="w-[640px] text-[#0030a0] opacity-[0.13]" />
        <Wordmark className="mt-[82px] ml-8 w-[564px] text-[78px] leading-[76px] text-[#3c466e] opacity-25" />
      </div>
      <div className="pointer-events-none absolute right-[26px] bottom-[15px] z-10 w-16">
        <BrandMark className="w-16 text-[#2b51a3] opacity-80" />
        <Wordmark className="mt-2 text-[11px] leading-3 text-[#2b4170]" />
      </div>
      <p className="pointer-events-none absolute right-[165px] bottom-0 z-10 text-[19px] leading-6 text-[#8b8b8b]">Activate Windows</p>
      <svg viewBox="0 0 12 18" className="pointer-events-none absolute top-[468px] left-[1018px] z-10 h-[18px] w-3">
        <path d="M1 0v14l3-3 3 6 2-1-3-6h5z" fill="#e8e8ee" stroke="#555" strokeWidth="0.6" />
      </svg>
    </div>
  );
};

export default App;
